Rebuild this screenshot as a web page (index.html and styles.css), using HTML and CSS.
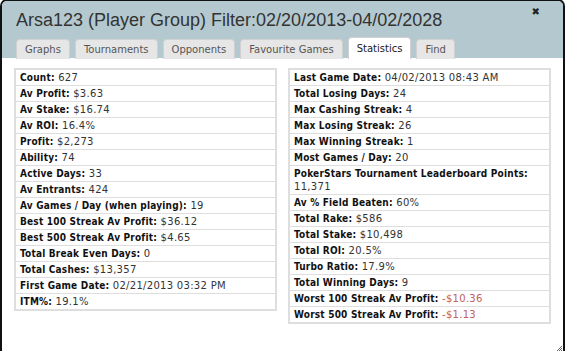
FILE: index.html
```html
<!DOCTYPE html>
<html>
<head>
<meta charset="utf-8">
<link rel="stylesheet" href="styles.css">
</head>
<body>
<div class="dialog">
  <div class="header">
    <div class="title">Arsa123 (Player Group) Filter:02/20/2013-04/02/2028</div>
    <span class="close">&#10006;</span>
    <ul class="tabs">
      <li class="tab">Graphs</li>
      <li class="tab">Tournaments</li>
      <li class="tab">Opponents</li>
      <li class="tab">Favourite Games</li>
      <li class="tab active">Statistics</li>
      <li class="tab">Find</li>
    </ul>
  </div>
  <div class="content">
    <table class="stats">
      <tr><td><b>Count:</b> 627</td></tr>
      <tr><td><b>Av Profit:</b> $3.63</td></tr>
      <tr><td><b>Av Stake:</b> $16.74</td></tr>
      <tr><td><b>Av ROI:</b> 16.4%</td></tr>
      <tr><td><b>Profit:</b> $2,273</td></tr>
      <tr><td><b>Ability:</b> 74</td></tr>
      <tr><td><b>Active Days:</b> 33</td></tr>
      <tr><td><b>Av Entrants:</b> 424</td></tr>
      <tr><td><b>Av Games / Day (when playing):</b> 19</td></tr>
      <tr><td><b>Best 100 Streak Av Profit:</b> $36.12</td></tr>
      <tr><td><b>Best 500 Streak Av Profit:</b> $4.65</td></tr>
      <tr><td><b>Total Break Even Days:</b> 0</td></tr>
      <tr><td><b>Total Cashes:</b> $13,357</td></tr>
      <tr><td><b>First Game Date:</b> 02/21/2013 03:32 PM</td></tr>
      <tr><td><b>ITM%:</b> 19.1%</td></tr>
    </table>
    <table class="stats">
      <tr><td><b>Last Game Date:</b> 04/02/2013 08:43 AM</td></tr>
      <tr><td><b>Total Losing Days:</b> 24</td></tr>
      <tr><td><b>Max Cashing Streak:</b> 4</td></tr>
      <tr><td><b>Max Losing Streak:</b> 26</td></tr>
      <tr><td><b>Max Winning Streak:</b> 1</td></tr>
      <tr><td><b>Most Games / Day:</b> 20</td></tr>
      <tr><td><b>PokerStars Tournament Leaderboard Points:</b> 11,371</td></tr>
      <tr><td><b>Av % Field Beaten:</b> 60%</td></tr>
      <tr><td><b>Total Rake:</b> $586</td></tr>
      <tr><td><b>Total Stake:</b> $10,498</td></tr>
      <tr><td><b>Total ROI:</b> 20.5%</td></tr>
      <tr><td><b>Turbo Ratio:</b> 17.9%</td></tr>
      <tr><td><b>Total Winning Days:</b> 9</td></tr>
      <tr><td><b>Worst 100 Streak Av Profit:</b> <span class="neg">-$10.36</span></td></tr>
      <tr><td><b>Worst 500 Streak Av Profit:</b> <span class="neg">-$1.13</span></td></tr>
    </table>
  </div>
  <div class="grip"></div>
</div>
</body>
</html>
```

FILE: styles.css
```css
html, body {
  margin: 0;
  padding: 0;
  background: #fff;
}
.dialog {
  position: relative;
  width: 561px;
  height: 352px;
  margin-top: -1px;
  border: 2px solid #111;
  border-bottom: 0;
  border-radius: 7px 7px 0 0;
  overflow: hidden;
  background: #fff;
  font-family: "DejaVu Sans", Verdana, sans-serif;
}
.header {
  position: relative;
  background: #b3c9cf;
  padding: 8px 0 0 14px;
  height: 49px;
}
.title {
  font-family: "Liberation Sans", Arial, sans-serif;
  font-size: 18px;
  line-height: 22px;
  color: #333;
}
.close {
  position: absolute;
  right: 23px;
  top: 5px;
  font-size: 10px;
  color: #222;
}
.tabs {
  list-style: none;
  margin: 6px 0 0 0;
  padding: 0;
  display: flex;
  gap: 5px;
  align-items: flex-end;
}
.tab {
  background: #e6e6e6;
  border: 1px solid #d0d0d0;
  border-bottom: 0;
  border-radius: 4px 4px 0 0;
  height: 19px;
  line-height: 19px;
  padding: 0 8px;
  font-size: 10px;
  color: #555;
}
.tab.active {
  background: #fff;
  height: 21px;
  line-height: 22px;
  color: #222;
}
.content {
  display: flex;
  align-items: flex-start;
  gap: 11px;
  padding: 10px 0 0 12px;
}
.stats {
  width: 263px;
  border-collapse: collapse;
  border: 2px solid #dedede;
  font-family: "DejaVu Sans", sans-serif;
  font-size: 10px;
  letter-spacing: 0.3px;
  color: #333;
}
.stats td {
  border-top: 1px solid #dedede;
  padding: 1px 4px 1px;
  line-height: 13px;
}
.stats b {
  font-family: "DejaVu Sans Condensed", "DejaVu Sans", sans-serif;
  letter-spacing: 0.2px;
  color: #111;
}
.neg {
  color: #c0605e;
}
.grip {
  position: absolute;
  right: 1px;
  bottom: 1px;
  width: 8px;
  height: 8px;
  background: linear-gradient(135deg, transparent 50%, #666 50%);
  -webkit-mask: repeating-conic-gradient(#000 0 25%, transparent 0 50%) 0 0 / 2px 2px;
}
```
